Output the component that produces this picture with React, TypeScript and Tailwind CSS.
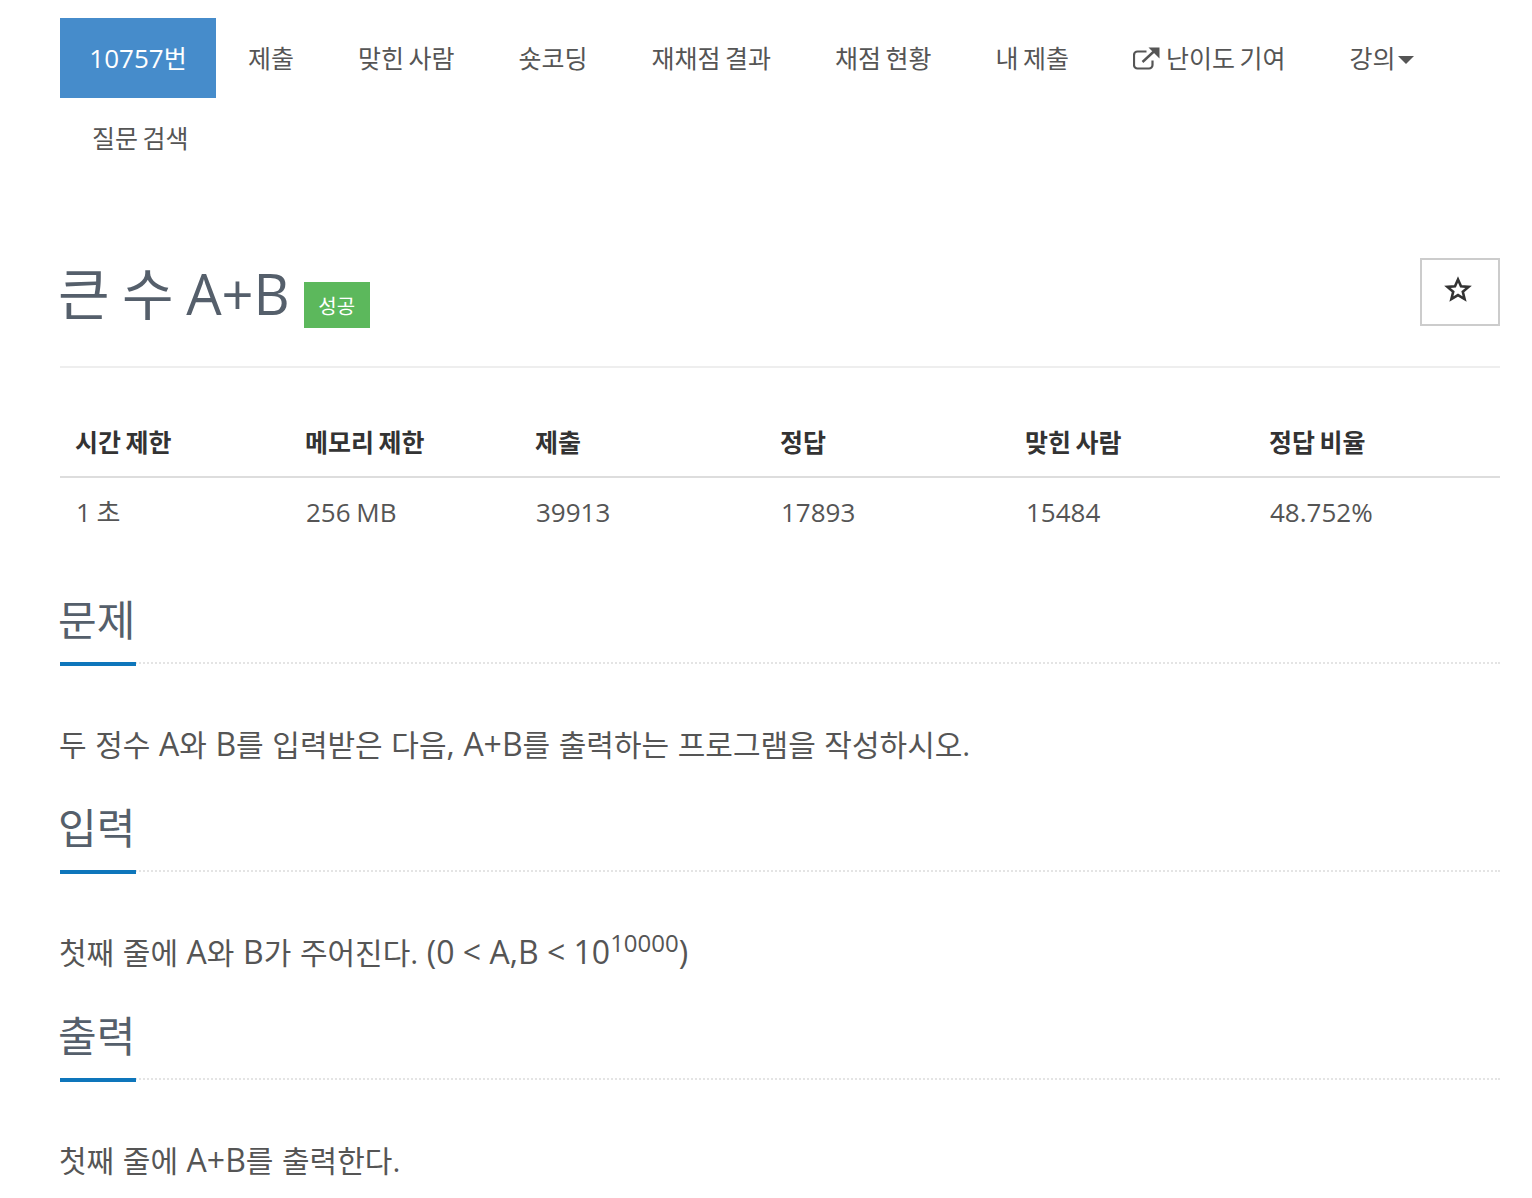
import React from "react";

const font = "font-['Open_Sans','Noto_Sans_CJK_KR',sans-serif]";
const tabs = ["제출", "맞힌 사람", "숏코딩", "재채점 결과", "채점 현황", "내 제출"];
const tabClass = "h-[80px] px-[32px] flex items-center whitespace-nowrap";

function L({ children }: { children: React.ReactNode }) {
  return <span className="text-[32px] [word-spacing:0px]">{children}</span>;
}

function Section({ title, children }: { title: string; children: React.ReactNode }) {
  return (
    <section>
      <div className="h-[102px] border-b-2 border-dotted border-[#e4e4e4]">
        <h2 className="h-[104px] w-[76px] border-b-4 border-[#0e76bb] pt-[33px] text-[42px] leading-[50px] font-normal whitespace-nowrap text-[#555f6b]">
          <span className="-ml-[2px]">{title}</span>
        </h2>
      </div>
      <p className="h-[106px] -ml-[1px] pt-[59px] text-[30px] leading-[42px] text-[#555] [word-spacing:0.8px] whitespace-nowrap">
        {children}
      </p>
    </section>
  );
}

const cols = [
  ["w-[230px]", "시간 제한", "1 초"],
  ["w-[230px]", "메모리 제한", "256 MB"],
  ["w-[245px]", "제출", "39913"],
  ["w-[245px]", "정답", "17893"],
  ["w-[244px]", "맞힌 사람", "15484"],
  ["w-[246px]", "정답 비율", "48.752%"],
];

export default function App() {
  return (
    <div className={`${font} w-[1532px] h-[1198px] overflow-hidden bg-white pl-[60px] pr-[32px] pt-[18px]`}>
      <nav className="flex flex-wrap text-[25px] leading-[34px] text-[#555] [word-spacing:-2px]">
        <a className="h-[80px] w-[156px] flex items-center justify-center bg-[#468ccb] text-white">
          <span className="text-[26px]">10757</span>번
        </a>
        {tabs.map((t) => (
          <a key={t} className={tabClass}>{t}</a>
        ))}
        <a className={tabClass}>
          <svg width="27" height="23" viewBox="0 0 27 23" fill="none" stroke="currentColor" strokeWidth="2.2" className="mr-[6px]">
            <path d="M19.500 13.500V18a3.500 3.500 0 0 1-3.500 3.500H4.500A3.500 3.500 0 0 1 1 18V8a3.500 3.500 0 0 1 3.500-3.500h9" />
            <path d="M9.500 15 23 2.500" strokeWidth="2.400" />
            <path d="M15.500 0.500H26.500V11.500Z" fill="currentColor" stroke="none" />
          </svg>
          난이도 기여
        </a>
        <a className={tabClass}>
          강의
          <span className="ml-[2px] mt-[4px] h-0 w-0 border-x-[8px] border-t-[8px] border-x-transparent border-t-[#555]" />
        </a>
        <a className={tabClass}>질문 검색</a>
      </nav>

      <header className="mt-[80px] h-[110px] border-b-2 border-[#eee] flex items-start justify-between">
        <div className="flex items-start">
          <h1 className="-ml-[2px] text-[56px] leading-[70px] font-normal text-[#555f6b] [word-spacing:-2px] whitespace-nowrap">
            큰 수 A+B
          </h1>
          <span className="ml-[14px] mt-[24px] flex h-[46px] w-[66px] items-center justify-center bg-[#5cb85c] pt-[4px] text-[20px] text-white">
            성공
          </span>
        </div>
        <button className="flex h-[68px] w-[80px] items-center justify-center border-2 border-[#ccc] bg-white pb-[6px] pr-[4px]">
          <svg width="28" height="26" viewBox="0 0 28 26" fill="none" stroke="#333" strokeWidth="2.600" strokeLinejoin="miter">
            <path d="M14 3.500 17 10.300 24.600 10.900 18.800 15.800 20.600 23 14 19.100 7.400 23 9.200 15.800 3.400 10.900 11 10.300Z" />
          </svg>
        </button>
      </header>

      <table className="mt-[41px] w-[1440px] table-fixed border-collapse text-[25px] [word-spacing:-2px]">
        <thead>
          <tr className="border-b-2 border-[#ddd]">
            {cols.map(([w, h]) => (
              <th key={h} className={`${w} h-[68px] pl-[15px] pr-[16px] text-left font-bold text-[#333] align-middle`}>{h}</th>
            ))}
          </tr>
        </thead>
        <tbody>
          <tr>
            {cols.map(([, h, v]) => (
              <td key={h} className="h-[70px] px-[16px] text-[26px] text-[#555] align-middle [word-spacing:-1px]">{v}</td>
            ))}
          </tr>
        </tbody>
      </table>

      <div className="mt-[15px]">
        <Section title="문제">두 정수 <L>A</L>와 <L>B</L>를 입력받은 다음<L>,</L> <L>A+B</L>를 출력하는 프로그램을 작성하시오.</Section>
        <Section title="입력">첫째 줄에 <L>A</L>와 <L>B</L>가 주어진다. <L>(0 &lt; A,B &lt; 10<sup>10000</sup>)</L></Section>
        <Section title="출력">첫째 줄에 <L>A+B</L>를 출력한다.</Section>
      </div>
    </div>
  );
}
